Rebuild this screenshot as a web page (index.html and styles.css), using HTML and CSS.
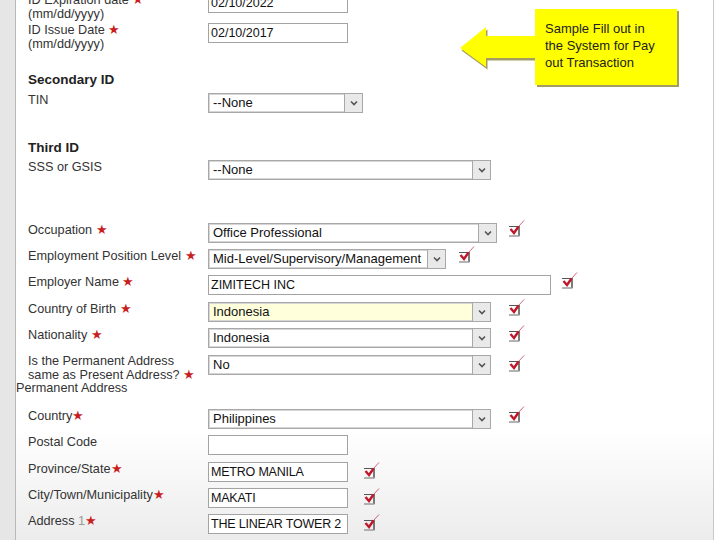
FILE: index.html
```html
<!DOCTYPE html>
<html>
<head>
<meta charset="utf-8">
<link rel="stylesheet" href="styles.css">
</head>
<body>
<div class="page">
  <div class="strip"></div>
  <div class="panel">
    <div class="form">
      <div class="row r-first">
        <div class="label">ID Expiration date <span class="req">★</span><br>(mm/dd/yyyy)</div>
        <div class="input w140">02/10/2022</div>
      </div>
      <div class="row m10">
        <div class="label">ID Issue Date <span class="req">★</span><br>(mm/dd/yyyy)</div>
        <div class="input w140">02/10/2017</div>
      </div>
      <div class="heading m29">Secondary ID</div>
      <div class="row m7">
        <div class="label">TIN</div>
        <div class="select w155"><span class="val">--None</span><span class="btn"><svg viewBox="0 0 10 10" width="10" height="10"><path d="M2 3.5 L5 6.5 L8 3.5" fill="none" stroke="#555" stroke-width="1.6"/></svg></span></div>
      </div>
      <div class="heading m27">Third ID</div>
      <div class="row m6">
        <div class="label">SSS or GSIS</div>
        <div class="select w283"><span class="val">--None</span><span class="btn"><svg viewBox="0 0 10 10" width="10" height="10"><path d="M2 3.5 L5 6.5 L8 3.5" fill="none" stroke="#555" stroke-width="1.6"/></svg></span></div>
      </div>
      <div class="row m43">
        <div class="label">Occupation <span class="req">★</span></div>
        <div class="select w289"><span class="val">Office Professional</span><span class="btn"><svg viewBox="0 0 10 10" width="10" height="10"><path d="M2 3.5 L5 6.5 L8 3.5" fill="none" stroke="#555" stroke-width="1.6"/></svg></span></div>
        <span class="chk g11"><svg viewBox="0 0 18 18" width="18" height="18"><path d="M2 6.5 H12" stroke="#555" stroke-width="1"/><path d="M12 6 V16" stroke="#444" stroke-width="1.4"/><path d="M2 16 H12.5" stroke="#9a9a9a" stroke-width="1.5"/><path d="M3.5 9 L7 13 L11.5 6.5" fill="none" stroke="#c0182a" stroke-width="2.4"/><path d="M11.5 6.5 L17 0.5" stroke="#c0405a" stroke-width="0.8"/></svg></span>
      </div>
      <div class="row m6">
        <div class="label">Employment Position Level <span class="req">★</span></div>
        <div class="select w238"><span class="val">Mid-Level/Supervisory/Management</span><span class="btn"><svg viewBox="0 0 10 10" width="10" height="10"><path d="M2 3.5 L5 6.5 L8 3.5" fill="none" stroke="#555" stroke-width="1.6"/></svg></span></div>
        <span class="chk g12"><svg viewBox="0 0 18 18" width="18" height="18"><path d="M2 6.5 H12" stroke="#555" stroke-width="1"/><path d="M12 6 V16" stroke="#444" stroke-width="1.4"/><path d="M2 16 H12.5" stroke="#9a9a9a" stroke-width="1.5"/><path d="M3.5 9 L7 13 L11.5 6.5" fill="none" stroke="#c0182a" stroke-width="2.4"/><path d="M11.5 6.5 L17 0.5" stroke="#c0405a" stroke-width="0.8"/></svg></span>
      </div>
      <div class="row m6">
        <div class="label">Employer Name <span class="req">★</span></div>
        <div class="input w343">ZIMITECH INC</div>
        <span class="chk g9"><svg viewBox="0 0 18 18" width="18" height="18"><path d="M2 6.5 H12" stroke="#555" stroke-width="1"/><path d="M12 6 V16" stroke="#444" stroke-width="1.4"/><path d="M2 16 H12.5" stroke="#9a9a9a" stroke-width="1.5"/><path d="M3.5 9 L7 13 L11.5 6.5" fill="none" stroke="#c0182a" stroke-width="2.4"/><path d="M11.5 6.5 L17 0.5" stroke="#c0405a" stroke-width="0.8"/></svg></span>
      </div>
      <div class="row m7">
        <div class="label">Country of Birth <span class="req">★</span></div>
        <div class="select w283 hl"><span class="val">Indonesia</span><span class="btn"><svg viewBox="0 0 10 10" width="10" height="10"><path d="M2 3.5 L5 6.5 L8 3.5" fill="none" stroke="#555" stroke-width="1.6"/></svg></span></div>
        <span class="chk g17"><svg viewBox="0 0 18 18" width="18" height="18"><path d="M2 6.5 H12" stroke="#555" stroke-width="1"/><path d="M12 6 V16" stroke="#444" stroke-width="1.4"/><path d="M2 16 H12.5" stroke="#9a9a9a" stroke-width="1.5"/><path d="M3.5 9 L7 13 L11.5 6.5" fill="none" stroke="#c0182a" stroke-width="2.4"/><path d="M11.5 6.5 L17 0.5" stroke="#c0405a" stroke-width="0.8"/></svg></span>
      </div>
      <div class="row m6">
        <div class="label">Nationality <span class="req">★</span></div>
        <div class="select w283"><span class="val">Indonesia</span><span class="btn"><svg viewBox="0 0 10 10" width="10" height="10"><path d="M2 3.5 L5 6.5 L8 3.5" fill="none" stroke="#555" stroke-width="1.6"/></svg></span></div>
        <span class="chk g17"><svg viewBox="0 0 18 18" width="18" height="18"><path d="M2 6.5 H12" stroke="#555" stroke-width="1"/><path d="M12 6 V16" stroke="#444" stroke-width="1.4"/><path d="M2 16 H12.5" stroke="#9a9a9a" stroke-width="1.5"/><path d="M3.5 9 L7 13 L11.5 6.5" fill="none" stroke="#c0182a" stroke-width="2.4"/><path d="M11.5 6.5 L17 0.5" stroke="#c0405a" stroke-width="0.8"/></svg></span>
      </div>
      <div class="row m7">
        <div class="label tight">Is the Permanent Address<br>same as Present Address? <span class="req">★</span></div>
        <div class="select w283"><span class="val">No</span><span class="btn"><svg viewBox="0 0 10 10" width="10" height="10"><path d="M2 3.5 L5 6.5 L8 3.5" fill="none" stroke="#555" stroke-width="1.6"/></svg></span></div>
        <span class="chk g17 low"><svg viewBox="0 0 18 18" width="18" height="18"><path d="M2 6.5 H12" stroke="#555" stroke-width="1"/><path d="M12 6 V16" stroke="#444" stroke-width="1.4"/><path d="M2 16 H12.5" stroke="#9a9a9a" stroke-width="1.5"/><path d="M3.5 9 L7 13 L11.5 6.5" fill="none" stroke="#c0182a" stroke-width="2.4"/><path d="M11.5 6.5 L17 0.5" stroke="#c0405a" stroke-width="0.8"/></svg></span>
      </div>
      <div class="subhead">Permanent Address</div>
      <div class="row m14">
        <div class="label">Country<span class="req">★</span></div>
        <div class="select w283"><span class="val">Philippines</span><span class="btn"><svg viewBox="0 0 10 10" width="10" height="10"><path d="M2 3.5 L5 6.5 L8 3.5" fill="none" stroke="#555" stroke-width="1.6"/></svg></span></div>
        <span class="chk g17"><svg viewBox="0 0 18 18" width="18" height="18"><path d="M2 6.5 H12" stroke="#555" stroke-width="1"/><path d="M12 6 V16" stroke="#444" stroke-width="1.4"/><path d="M2 16 H12.5" stroke="#9a9a9a" stroke-width="1.5"/><path d="M3.5 9 L7 13 L11.5 6.5" fill="none" stroke="#c0182a" stroke-width="2.4"/><path d="M11.5 6.5 L17 0.5" stroke="#c0405a" stroke-width="0.8"/></svg></span>
      </div>
      <div class="row m6">
        <div class="label">Postal Code</div>
        <div class="input w140"></div>
      </div>
      <div class="row m7">
        <div class="label">Province/State<span class="req">★</span></div>
        <div class="input w140 caps">METRO MANILA</div>
        <span class="chk g14 low"><svg viewBox="0 0 18 18" width="18" height="18"><path d="M2 6.5 H12" stroke="#555" stroke-width="1"/><path d="M12 6 V16" stroke="#444" stroke-width="1.4"/><path d="M2 16 H12.5" stroke="#9a9a9a" stroke-width="1.5"/><path d="M3.5 9 L7 13 L11.5 6.5" fill="none" stroke="#c0182a" stroke-width="2.4"/><path d="M11.5 6.5 L17 0.5" stroke="#c0405a" stroke-width="0.8"/></svg></span>
      </div>
      <div class="row m6">
        <div class="label">City/Town/Municipality<span class="req">★</span></div>
        <div class="input w140 caps">MAKATI</div>
        <span class="chk g14 low"><svg viewBox="0 0 18 18" width="18" height="18"><path d="M2 6.5 H12" stroke="#555" stroke-width="1"/><path d="M12 6 V16" stroke="#444" stroke-width="1.4"/><path d="M2 16 H12.5" stroke="#9a9a9a" stroke-width="1.5"/><path d="M3.5 9 L7 13 L11.5 6.5" fill="none" stroke="#c0182a" stroke-width="2.4"/><path d="M11.5 6.5 L17 0.5" stroke="#c0405a" stroke-width="0.8"/></svg></span>
      </div>
      <div class="row m6">
        <div class="label">Address <span class="dim">1</span><span class="req">★</span></div>
        <div class="input w140 caps">THE LINEAR TOWER 2</div>
        <span class="chk g14 low"><svg viewBox="0 0 18 18" width="18" height="18"><path d="M2 6.5 H12" stroke="#555" stroke-width="1"/><path d="M12 6 V16" stroke="#444" stroke-width="1.4"/><path d="M2 16 H12.5" stroke="#9a9a9a" stroke-width="1.5"/><path d="M3.5 9 L7 13 L11.5 6.5" fill="none" stroke="#c0182a" stroke-width="2.4"/><path d="M11.5 6.5 L17 0.5" stroke="#c0405a" stroke-width="0.8"/></svg></span>
      </div>
    </div>
  </div>
  <svg class="arrow" viewBox="0 0 80 44" width="80" height="44">
    <path d="M2 22 L28 1 L28 10 L78 10 L78 32 L28 32 L28 41 Z" fill="#a39d62" transform="translate(1.5,2.5)"/>
    <path d="M2 22 L28 1 L28 10 L78 10 L78 32 L28 32 L28 41 Z" fill="#ffff00"/>
  </svg>
  <div class="callout">Sample Fill out in the System for Pay out Transaction</div>
</div>
</body>
</html>
```
FILE: styles.css
```css
html, body {
  margin: 0;
  padding: 0;
  background: #ffffff;
}
body {
  font-family: "Liberation Sans", Arial, sans-serif;
  color: #2b2b2b;
  overflow: hidden;
}
.page {
  position: relative;
  width: 720px;
  height: 540px;
  display: flex;
  overflow: hidden;
}
.strip {
  width: 15px;
  flex: none;
  background: #e6e6e6;
  border-right: 1px solid #b9b9b9;
}
.panel {
  width: 697px;
  flex: none;
  border-right: 1px solid #c8c8c8;
  background: linear-gradient(to bottom, #ffffff 0px, #ffffff 430px, #ececec 540px);
}
.form {
  padding-left: 12px;
}
.row {
  display: flex;
  align-items: flex-start;
  height: 20px;
}
.r-first { margin-top: -7px; }
.m6 { margin-top: 6px; }
.m7 { margin-top: 7px; }
.m10 { margin-top: 10px; }
.m14 { margin-top: 14px; }
.m27 { margin-top: 27px; }
.m29 { margin-top: 29px; }
.m43 { margin-top: 43px; }
.label {
  width: 180px;
  flex: none;
  font-size: 12.7px;
  line-height: 14px;
  margin-top: 0;
  color: #333;
  white-space: nowrap;
}
.label.tight { line-height: 13px; }
.req {
  color: #c81e1e;
  font-size: 13px;
}
.dim { color: #9a9a9a; }
.heading {
  font-weight: bold;
  font-size: 13.5px;
  line-height: 14px;
  height: 13px;
  padding-top: 1px;
  color: #222;
}
.subhead {
  margin-top: 6px;
  margin-left: -12px;
  font-size: 12.7px;
  line-height: 14px;
  height: 14px;
  color: #333;
}
.input {
  box-sizing: border-box;
  height: 20px;
  border: 1px solid #a3a3a3;
  background: #fff;
  font-size: 12.5px;
  line-height: 18px;
  padding-left: 2px;
  color: #111;
  white-space: nowrap;
  overflow: hidden;
}
.caps { letter-spacing: -0.2px; }
.select {
  box-sizing: border-box;
  height: 20px;
  border: 1px solid #a8a8a8;
  box-shadow: inset 0 0 0 1px #d6d6d6;
  background: #fff;
  display: flex;
  font-size: 13px;
  color: #111;
}
.select.hl { background: #ffffdc; }
.val {
  flex: 1;
  padding-left: 4px;
  line-height: 18px;
  white-space: nowrap;
  overflow: hidden;
}
.btn {
  width: 17px;
  flex: none;
  background: #e9e9e9;
  border-left: 1px solid #a8a8a8;
  display: flex;
  align-items: center;
  justify-content: center;
}
.w140 { width: 140px; }
.w155 { width: 155px; }
.w238 { width: 238px; }
.w283 { width: 283px; }
.w289 { width: 289px; }
.w343 { width: 343px; }
.chk {
  display: block;
  width: 18px;
  height: 18px;
  margin-top: -3px;
}
.chk.low { margin-top: 0; }
.g9 { margin-left: 9px; }
.g11 { margin-left: 10px; }
.g12 { margin-left: 11px; }
.g14 { margin-left: 14px; }
.g17 { margin-left: 16px; }
.arrow {
  position: absolute;
  left: 458px;
  top: 26px;
}
.callout {
  position: absolute;
  left: 535px;
  top: 9px;
  width: 142px;
  height: 76px;
  box-sizing: border-box;
  background: #ffff00;
  box-shadow: 2px 2px 0 #a39d62;
  padding: 11px 13px 0 10px;
  font-size: 13px;
  line-height: 17px;
  color: #222;
}
```
